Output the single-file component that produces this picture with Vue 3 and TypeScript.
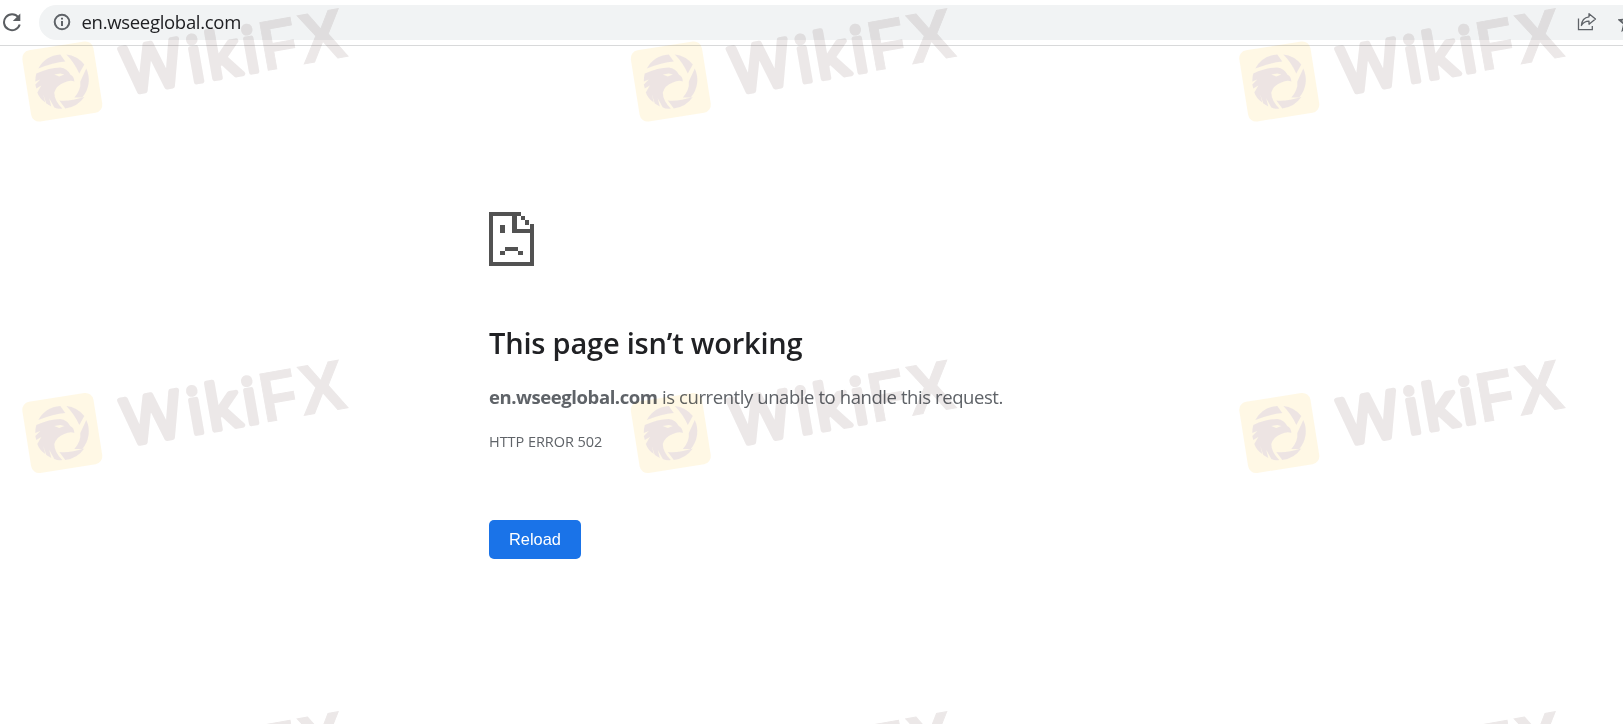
<script setup lang="ts">
interface Glyph { char: string; x: number; width: number; size: number; baseline: number; soft: boolean }

const tiles = [0, 1, 2].flatMap((row) =>
  [0, 1, 2].map((col) => ({ id: `${row}-${col}`, x: col * 608.5, y: row * 351.5 })),
)

const glyphs: Glyph[] = [
  { char: 'W', x: 108.5, width: 59.5, size: 64, baseline: 114.6, soft: true },
  { char: 'i', x: 174, width: 16, size: 62.5, baseline: 114.6, soft: true },
  { char: 'k', x: 192.5, width: 34, size: 62.5, baseline: 114.6, soft: true },
  { char: 'i', x: 229.8, width: 16, size: 62.5, baseline: 114.6, soft: true },
  { char: 'F', x: 248, width: 37, size: 70.5, baseline: 115.8, soft: false },
  { char: 'X', x: 288, width: 45.5, size: 70.5, baseline: 115.8, soft: false },
]
</script>

<template>
  <div class="page">
    <header class="toolbar">
      <svg class="reload-icon" viewBox="0 0 20 20">
        <path d="M16.3 5.2A8 8 0 1 0 17.7 12.5" fill="none" stroke="#5b5e62" stroke-width="2" />
        <path d="M18.3 1.5V9H10.8Z" fill="#5b5e62" />
      </svg>
      <div class="omnibox">
        <svg class="info-icon" viewBox="0 0 18 18">
          <circle cx="9" cy="9" r="7.3" fill="none" stroke="#5f6368" stroke-width="2" />
          <path d="M9 8V13M9 4.8V6.6" stroke="#5f6368" stroke-width="2" />
        </svg>
        <span class="url">en.wseeglobal.com</span>
        <svg class="share-icon" viewBox="0 0 20 20">
          <path d="M1.5 6.5V17.7H15.3V14" fill="none" stroke="#5f6368" stroke-width="1.3" />
          <path d="M12 1.7L18.5 7L12 12.2V9.2C8.2 9.2 6 10.8 4.4 13.5C4.7 8.8 7.2 5.4 12 4.8Z" fill="none" stroke="#5f6368" stroke-width="1.3" stroke-linejoin="round" />
        </svg>
        <svg class="star-icon" viewBox="0 0 20 20">
          <path d="M10 1.8L12.4 7.4L18.5 8L13.9 12L15.3 18L10 14.8L4.7 18L6.1 12L1.5 8L7.6 7.4Z" fill="none" stroke="#5f6368" stroke-width="1.9" />
        </svg>
      </div>
    </header>

    <main class="error">
      <svg class="sad-page" viewBox="0 0 135 162" shape-rendering="crispEdges">
        <path fill="#525252" d="M0 0H95V13H83V51H123V37H135V162H0ZM13 13V149H123V64H70V13Z" fill-rule="evenodd" />
        <path fill="#525252" d="M95 13h13v12h-13zM108 25h13v13h-13zM34 38h13v26h-13zM48 104h40v13h-40zM34 117h14v12h-14zM88 117h14v12h-14z" />
      </svg>
      <h1>This page isn’t working</h1>
      <p class="summary"><strong>en.wseeglobal.com</strong><span> is currently unable to handle this request.</span></p>
      <p class="code">HTTP ERROR 502</p>
      <button type="button">Reload</button>
    </main>

    <svg class="watermark" viewBox="0 0 1623 724" aria-hidden="true">
      <g v-for="tile in tiles" :key="tile.id" :transform="`translate(${tile.x} ${tile.y})`">
        <g transform="translate(62.3 81.5)">
          <rect x="-36" y="-36" width="72" height="72" rx="8" transform="rotate(-9)" fill="#ffebb0" fill-opacity=".33" />
          <g class="crest">
            <path d="M-24 -13A27 27 0 0 1 -2 -27L3 -20Q-9 -19 -24 -13Z" />
            <path d="M4 -27A27 27 0 0 1 22 -17L17 -8Q12 -19 4 -27Z" />
            <path d="M24 -13A27 27 0 0 1 20 16L12 16Q19 8 18 0Z" />
            <path d="M22 15.5A27 27 0 0 1 3 27L-3 19Q8 20 22 15.5Z" />
            <path fill-rule="evenodd" d="M-26 -8Q-13 -14 -2 -14Q5 -13 8 -7Q12 -5 12 0Q8 -2 2 1Q-6 4 -8 11Q-8 19 0 27Q-4 28 -8 26L-13 17L-11 25L-16 22L-19 13L-17 21Q-23 17 -25 11L-21 4L-26 7L-27 3L-22 -2L-27 0Q-27 -5 -26 -8ZM-8 -7L-3 -5L2 -7L-2 -8Z" />
          </g>
        </g>
        <g transform="rotate(-10)" class="brand">
          <text
            v-for="(glyph, index) in glyphs"
            :key="index"
            :class="{ soft: glyph.soft }"
            :x="glyph.x"
            :y="glyph.baseline"
            :font-size="glyph.size"
            :textLength="glyph.width"
            lengthAdjust="spacingAndGlyphs"
          >{{ glyph.char }}</text>
        </g>
      </g>
    </svg>
  </div>
</template>

<style>
body { margin: 0; background: #fff; overflow: hidden; }
</style>

<style scoped>
.page {
  position: relative;
  width: 1623px;
  height: 724px;
  overflow: hidden;
  background: #fff;
  font-family: "Open Sans", "Noto Sans", sans-serif;
}
.toolbar {
  box-sizing: border-box;
  display: flex;
  align-items: center;
  height: 46px;
  padding: 5px 0 6px 2px;
  border-bottom: 1px solid #d8d9da;
}
.reload-icon { flex: none; width: 20px; height: 20px; margin-right: 17px; }
.omnibox {
  display: flex;
  flex: 1;
  align-items: center;
  height: 35px;
  padding-left: 13.5px;
  border-radius: 18px 0 0 18px;
  background: #f1f3f4;
  overflow: hidden;
}
.info-icon { flex: none; width: 18px; height: 18px; margin-right: 11px; }
.url { flex: 1; color: #202124; font-size: 18.5px; line-height: 24px; letter-spacing: -0.3px; }
.share-icon { flex: none; width: 20px; height: 20px; margin-right: 21px; }
.star-icon { flex: none; width: 20px; height: 20px; margin-right: -15px; }
.error {
  display: flex;
  flex-direction: column;
  align-items: flex-start;
  padding: 166px 0 0 489px;
  color: #5f6368;
}
.sad-page { width: 45px; height: 54px; }
h1 {
  margin: 57px 0 0;
  color: #202124;
  font-size: 29px;
  font-weight: 600;
  line-height: 40px;
  letter-spacing: -0.2px;
  white-space: nowrap;
}
.summary { margin: 22px 0 0; font-size: 18.5px; line-height: 24px; letter-spacing: -0.42px; white-space: pre; }
.summary strong { font-weight: 700; }
.code { margin: 23px 0 0; font-size: 14.5px; line-height: 20px; letter-spacing: -0.05px; white-space: nowrap; }
button {
  width: 92px;
  height: 39px;
  margin-top: 68px;
  padding: 0;
  border: 0;
  border-radius: 5px;
  background: #1a73e8;
  color: #fff;
  font-family: "Liberation Sans", Arial, sans-serif;
  font-size: 16.4px;
}
.watermark {
  position: absolute;
  inset: 0;
  width: 1623px;
  height: 724px;
  pointer-events: none;
  mix-blend-mode: multiply;
}
.crest { fill: #e9e0e3; fill-opacity: .8; }
.brand { fill: #d2c9c9; opacity: .42; font-family: "Liberation Sans", Arial, sans-serif; font-weight: 700; stroke: #d2c9c9; stroke-width: 1px; }
.brand .soft {
  font-family: "Open Sans", "Noto Sans", sans-serif;
  font-weight: 400;
  stroke-width: 5.2px;
  stroke-linejoin: round;
  stroke-linecap: round;
}
</style>
